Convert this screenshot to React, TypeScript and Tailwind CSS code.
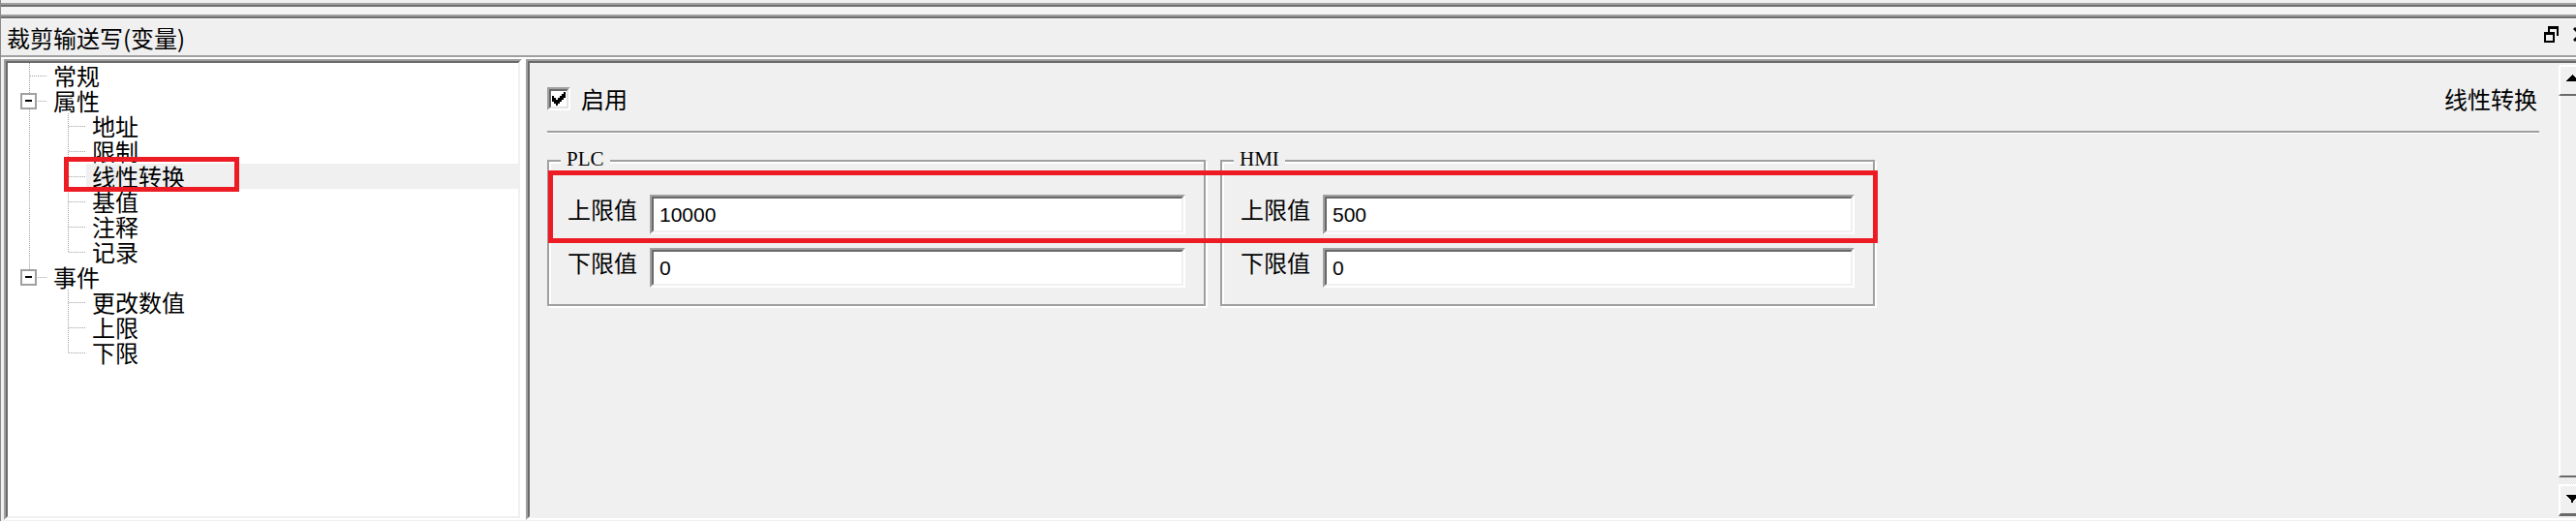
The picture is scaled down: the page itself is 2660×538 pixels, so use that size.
import React from "react";

const CJK = "font-['Noto_Sans_CJK_SC',sans-serif]";

type TreeNode = {
  label: string;
  level: 0 | 1;
  expander?: boolean;
  last?: boolean;
  rootCont?: boolean;
  selected?: boolean;
};

const tree: TreeNode[] = [
  { label: "常规", level: 0 },
  { label: "属性", level: 0, expander: true },
  { label: "地址", level: 1, rootCont: true },
  { label: "限制", level: 1, rootCont: true },
  { label: "线性转换", level: 1, rootCont: true, selected: true },
  { label: "基值", level: 1, rootCont: true },
  { label: "注释", level: 1, rootCont: true },
  { label: "记录", level: 1, rootCont: true, last: true },
  { label: "事件", level: 0, expander: true, last: true },
  { label: "更改数值", level: 1 },
  { label: "上限", level: 1 },
  { label: "下限", level: 1, last: true },
];

const dot = { stroke: "#a0a0a0", strokeWidth: 1, strokeDasharray: "1 1" };

function TreeRow({ node }: { node: TreeNode }) {
  const gutter = node.level === 0 ? 41 : 81;
  return (
    <div className="flex h-[26px]">
      <svg width={gutter} height={26} className="shrink-0" shapeRendering="crispEdges">
        {node.level === 0 ? (
          <>
            <line x1={22.5} y1={0} x2={22.5} y2={node.last ? 13 : 26} {...dot} />
            <line x1={23} y1={13.5} x2={41} y2={13.5} {...dot} />
            {node.expander && (
              <g>
                <rect x={14} y={6} width={15} height={15} fill="#ffffff" stroke="#a0a0a0" strokeWidth={2} />
                <rect x={18} y={12} width={7} height={2} fill="#000000" />
              </g>
            )}
          </>
        ) : (
          <>
            {node.rootCont && <line x1={22.5} y1={0} x2={22.5} y2={26} {...dot} />}
            <line x1={62.5} y1={0} x2={62.5} y2={node.last ? 13 : 26} {...dot} />
            <line x1={63} y1={13.5} x2={81} y2={13.5} {...dot} />
          </>
        )}
      </svg>
      <div className={`flex-1 pl-[6px] text-[24px] leading-[26px] text-black ${node.selected ? "bg-[#f0f0f0]" : ""}`}>
        {node.label}
      </div>
    </div>
  );
}

function Field({ label, value }: { label: string; value: string }) {
  return (
    <div className="flex items-start h-[41px]">
      <span className="w-[72px] shrink-0 mt-[2px] text-[24px] leading-[26px] text-black">{label}</span>
      <div className="ml-[13px] flex-1 h-[41px] border-2 border-t-[#a0a0a0] border-l-[#a0a0a0] border-r-white border-b-white">
        <div className="h-full border-2 border-t-[#696969] border-l-[#696969] border-r-[#f0f0f0] border-b-[#f0f0f0] bg-white flex items-center pl-[6px]">
          <span className="font-['Liberation_Sans',sans-serif] text-[21px] leading-none text-black">{value}</span>
        </div>
      </div>
    </div>
  );
}

function Group({ title, width, upper, lower }: { title: string; width: string; upper: string; lower: string }) {
  return (
    <div
      className={`relative ${width} h-[151px] border-2 border-[#a0a0a0] shadow-[2px_2px_0_0_#ffffff,inset_2px_2px_0_0_#ffffff] pt-[34px] pl-[19px] pr-[19px]`}
    >
      <span className="absolute left-[12px] top-[-13px] px-[6px] bg-[#f0f0f0] font-['Liberation_Serif',serif] text-[21px] leading-[20px] text-black">
        {title}
      </span>
      <Field label="上限值" value={upper} />
      <div className="h-[14px]" />
      <Field label="下限值" value={lower} />
    </div>
  );
}

export default function App() {
  return (
    <div className={`relative w-[2660px] h-[538px] overflow-hidden bg-[#f0f0f0] border-l border-l-[#8a8a8a] flex flex-col ${CJK}`}>
      <div className="h-[3px] shrink-0" />
      <div className="h-[2px] shrink-0 bg-[#a0a0a0]" />
      <div className="h-[2px] shrink-0 bg-[#6f6f6f]" />
      <div className="h-[8px] shrink-0 bg-[#f4f4f4]" />
      <div className="h-[2px] shrink-0 bg-[#a0a0a0]" />
      <div className="h-[2px] shrink-0 bg-[#6f6f6f]" />
      <div className="h-[1px] shrink-0 bg-white" />

      {/* title bar */}
      <div className="h-[37px] shrink-0 flex items-center justify-between pl-[6px]">
        <span className="text-[24px] leading-[26px] text-black">裁剪输送写(变量)</span>
        <div className="flex items-start self-start mt-[7px]">
          <svg width="15" height="17" viewBox="0 0 15 17" shapeRendering="crispEdges">
            <path d="M4 0h11v10h-2V3H6v3H4z" fill="#000" />
            <path d="M0 6h11v11H0zM2 9v6h7V9z" fill="#000" fillRule="evenodd" />
          </svg>
          <div className="ml-[15px] w-[3px] h-[16px] overflow-hidden mt-[1px]">
            <svg width="15" height="15" viewBox="0 0 15 15">
              <path d="M1 1L14 14M14 1L1 14" stroke="#000" strokeWidth="3" />
            </svg>
          </div>
        </div>
      </div>
      <div className="h-[2px] shrink-0 bg-[#a0a0a0]" />
      <div className="h-[2px] shrink-0 bg-white" />

      {/* main */}
      <div className="flex flex-1 min-h-0 pb-[1px]">
        {/* tree */}
        <div className="ml-[3px] w-[535px] shrink-0 border-2 border-t-[#a0a0a0] border-l-[#a0a0a0] border-r-white border-b-white">
          <div className="h-full border-2 border-t-[#696969] border-l-[#696969] border-r-[#f0f0f0] border-b-[#f0f0f0] bg-white">
            {tree.map((n) => (
              <TreeRow key={n.label} node={n} />
            ))}
          </div>
        </div>
        <div className="w-[4px] shrink-0 bg-white" />

        {/* property page */}
        <div className="w-[2129px] shrink-0 border-2 border-t-[#a0a0a0] border-l-[#a0a0a0] border-r-white border-b-white">
          <div className="h-full flex border-2 border-t-[#696969] border-l-[#696969] border-r-[#f0f0f0] border-b-[#f0f0f0]">
            <div className="w-[2095px] shrink-0 flex flex-col pl-[18px] pr-[20px]">
              <div className="mt-[24px] h-[26px] flex items-center justify-between">
                <div className="flex items-center">
                  <div className="w-[24px] h-[24px] border-2 border-t-[#a0a0a0] border-l-[#a0a0a0] border-r-white border-b-white">
                    <div className="h-full border-2 border-t-[#696969] border-l-[#696969] border-r-[#e3e3e3] border-b-[#e3e3e3] bg-white flex items-center justify-center">
                      <svg width="14" height="14" viewBox="0 0 7 7" shapeRendering="crispEdges">
                        <path d="M0 2h1v1h1v1h1V3h1V2h1V1h1V0h1v3H6v1H5v1H4v1H3v1H2V6H1V5H0z" fill="#000" />
                      </svg>
                    </div>
                  </div>
                  <span className="ml-[11px] text-[24px] leading-[26px] text-black">启用</span>
                </div>
                <span className="mr-[2px] text-[24px] leading-[26px] text-black">线性转换</span>
              </div>
              <div className="mt-[20px] h-[2px] bg-[#a0a0a0]" />
              <div className="h-[1px] bg-white" />
              <div className="mt-[27px] flex gap-[15px]">
                <Group title="PLC" width="w-[680px]" upper="10000" lower="0" />
                <Group title="HMI" width="w-[676px]" upper="500" lower="0" />
              </div>
            </div>

            {/* scrollbar */}
            <div className="w-[26px] shrink-0 flex flex-col pt-[2px]">
              <div className="h-[32px] shrink-0 border-t-2 border-l-2 border-t-white border-l-white border-b-2 border-b-[#696969] flex justify-center pt-[8px]">
                <svg width="14" height="7" viewBox="0 0 14 7" shapeRendering="crispEdges">
                  <path d="M0 7L7 0L14 7z" fill="#000" />
                </svg>
              </div>
              <div className="flex-1 border-l-2 border-l-white border-b-2 border-b-[#696969]" />
              <div className="h-[7px] shrink-0 bg-[image:repeating-conic-gradient(#ffffff_0_25%,#dcdcdc_0_50%)] bg-[length:2px_2px]" />
              <div className="h-[33px] shrink-0 border-t-2 border-l-2 border-t-white border-l-white border-b-[3px] border-b-[#696969] flex justify-center pt-[9px]">
                <svg width="14" height="8" viewBox="0 0 14 8" shapeRendering="crispEdges">
                  <path d="M0 0H14L7 7z" fill="#000" />
                  <rect x="6" y="6" width="2" height="2" fill="#000" />
                </svg>
              </div>
            </div>
          </div>
        </div>
      </div>

      {/* red annotation boxes */}
      <div className="absolute left-[65px] top-[162px] w-[181px] h-[36px] border-[5px] border-[#ed1c24]" />
      <div className="absolute left-[565px] top-[176px] w-[1373px] h-[75px] border-[5px] border-[#ed1c24]" />
    </div>
  );
}
